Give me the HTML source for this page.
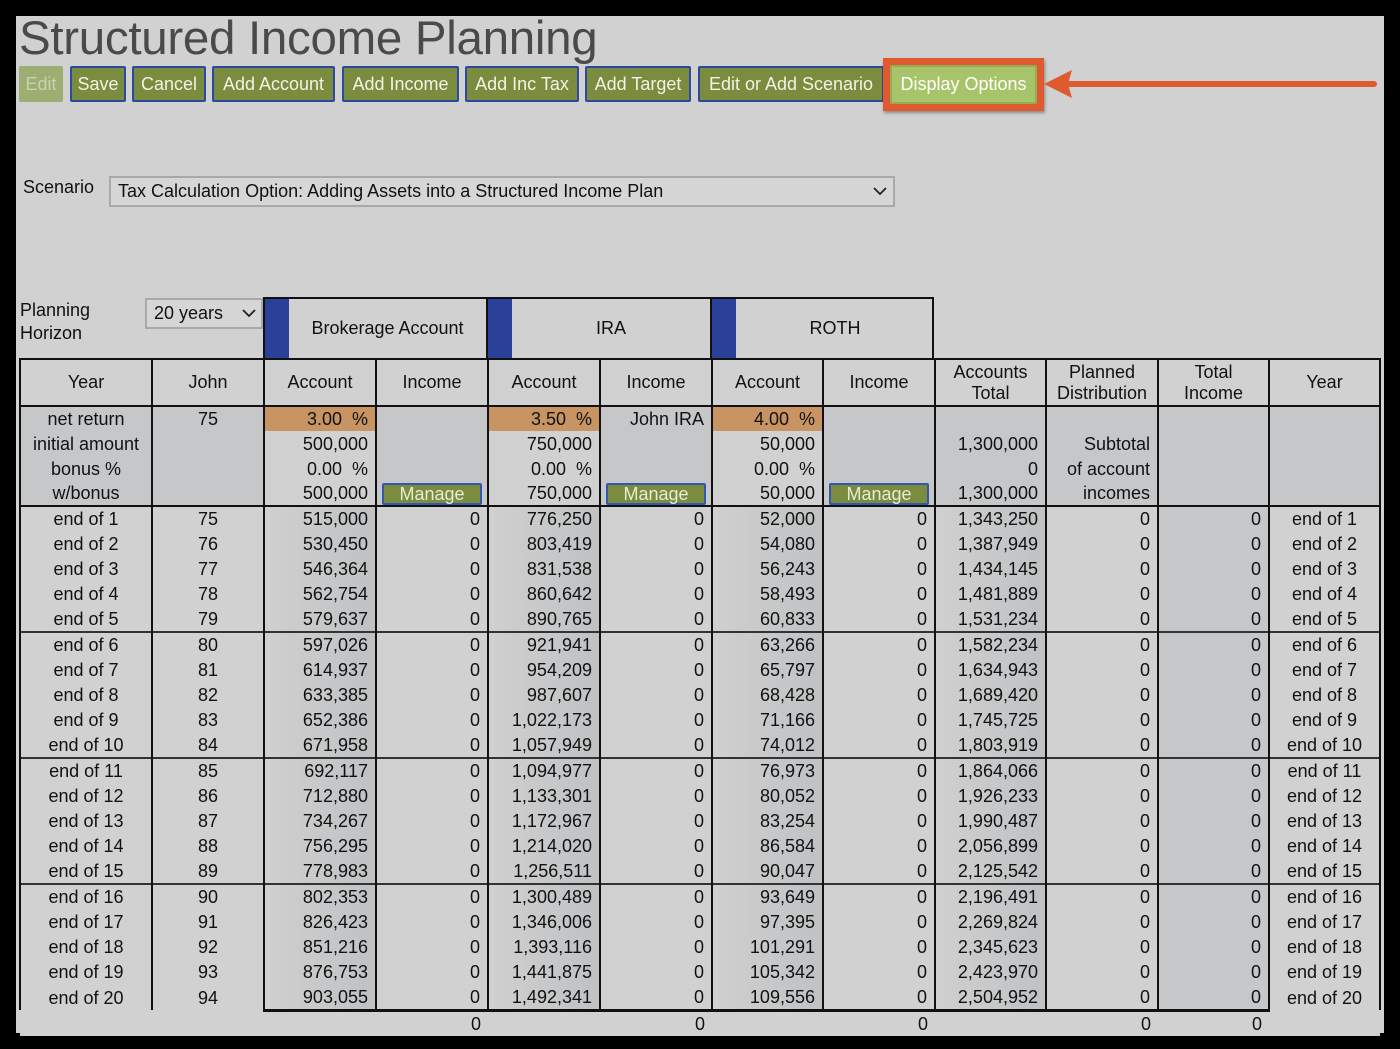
<!DOCTYPE html>
<html><head><meta charset="utf-8"><style>
*{box-sizing:border-box;margin:0;padding:0}
body{width:1400px;height:1049px;background:#000;position:relative;overflow:hidden;font-family:"Liberation Sans",Arial,sans-serif;color:#111}
#pg{position:absolute;left:16px;top:16px;width:1368px;height:1017px;background:#d1d1d1}
.a{position:absolute}
h1{position:absolute;left:3px;top:-5px;font-size:47.5px;font-weight:normal;color:#4a4a4a;letter-spacing:-0.3px}
.btn{position:absolute;top:50px;height:36px;background:#7b8c3e;border:2px solid #2c4ba0;border-radius:2px;color:#f0f3e6;font-size:18px;line-height:32px;text-align:center;white-space:nowrap}
.sel{position:absolute;background:#d6d6d6;border:2px solid #a9a9a9;font-size:18px;padding-left:7px}
table{position:absolute;left:3px;top:342px;border-collapse:collapse;table-layout:fixed;width:1360px}
td{border-left:2px solid #111;border-right:2px solid #111;height:25.2px;font-size:18px;line-height:24px;padding:0 7px;text-align:right;white-space:nowrap;overflow:hidden}
tr.h td{height:47px;border-top:2px solid #111;border-bottom:2px solid #111;text-align:center;line-height:21px;font-size:18px;background:#d1d1d1}
tr.p td{height:25px;background:#c5c7c9}
tr.p td.l{background:#d1d1d1}
tr.p td.o{background:#c99463}
tr.p1 td{border-top:2px solid #111}
td.c{text-align:center}
td.d{background:linear-gradient(to right,#d0d0d0,#bfc1c3)}
td.g{background:#c5c7c9}
tr.s td{border-top:2px solid #333}
tr.p4 td{border-bottom:2px solid #111}
.mg{display:inline-block;width:100px;height:22px;background:#7b8c3e;border:2px solid #3556b0;border-radius:2px;color:#e6ecd6;text-align:center;line-height:19px;font-size:18px;vertical-align:middle}
tr.last td{border-bottom:3px solid #111}
tr.last td.nb{border-bottom:none}
tr.tot td{border:none;background:#d1d1d1;height:24px}
</style></head><body>
<div id="pg">
<h1>Structured Income Planning</h1>
<div class="btn" style="left:3px;width:44px;background:#9cae72;border-color:#9cae72;color:#c9d3b1">Edit</div>
<div class="btn" style="left:54px;width:56px">Save</div>
<div class="btn" style="left:116px;width:74px">Cancel</div>
<div class="btn" style="left:196px;width:123px">Add Account</div>
<div class="btn" style="left:326px;width:117px">Add Income</div>
<div class="btn" style="left:449px;width:114px">Add Inc Tax</div>
<div class="btn" style="left:569px;width:106px">Add Target</div>
<div class="btn" style="left:682px;width:186px">Edit or Add Scenario</div>
<div class="a" style="left:867px;top:42px;width:161px;height:53px;background:#e05a30;box-shadow:1px 2px 3px rgba(0,0,0,.35)"></div>
<div class="btn" style="left:874px;top:49px;width:147px;height:39px;background:#a8c46a;border:2px solid #93ad55;color:#fff;line-height:35px">Display Options</div>
<svg class="a" style="left:1028px;top:52px" width="336" height="34"><path d="M12 16 L330 16" stroke="#e05a30" stroke-width="6" stroke-linecap="round"/><path d="M0 16 L28 2 L24 16 L28 30 Z" fill="#e05a30"/></svg>

<div class="a" style="left:7px;top:161px;font-size:18px">Scenario</div>
<div class="sel" style="left:93px;top:160px;width:786px;height:31px;line-height:27px">Tax Calculation Option: Adding Assets into a Structured Income Plan
<svg class="a" style="right:6px;top:9px" width="14" height="9"><path d="M1 1 L7 7 L13 1" stroke="#222" stroke-width="1.8" fill="none"/></svg></div>

<div class="a" style="left:4px;top:283px;font-size:18px;line-height:23px">Planning<br>Horizon</div>
<div class="sel" style="left:129px;top:282px;width:118px;height:31px;line-height:27px">20 years
<svg class="a" style="right:5px;top:9px" width="14" height="9"><path d="M1 1 L7 7 L13 1" stroke="#222" stroke-width="1.8" fill="none"/></svg></div>

<div class="a" style="left:247px;top:281px;width:671px;height:62px;border:2px solid #111;border-bottom:none;background:#d1d1d1"></div>
<div class="a" style="left:470px;top:281px;width:2px;height:61px;background:#111"></div>
<div class="a" style="left:694px;top:281px;width:2px;height:61px;background:#111"></div>
<div class="a" style="left:249px;top:283px;width:24px;height:60px;background:#2b4199"></div>
<div class="a" style="left:472px;top:283px;width:24px;height:60px;background:#2b4199"></div>
<div class="a" style="left:696px;top:283px;width:24px;height:60px;background:#2b4199"></div>
<div class="a" style="left:273px;top:302px;width:197px;text-align:center;font-size:18px">Brokerage Account</div>
<div class="a" style="left:496px;top:302px;width:198px;text-align:center;font-size:18px">IRA</div>
<div class="a" style="left:720px;top:302px;width:198px;text-align:center;font-size:18px">ROTH</div>

<table>
<colgroup><col style="width:132px"><col style="width:112px"><col style="width:112px"><col style="width:112px"><col style="width:112px"><col style="width:112px"><col style="width:111px"><col style="width:112px"><col style="width:111px"><col style="width:112px"><col style="width:111px"><col style="width:111px"></colgroup>
<tr class="h"><td>Year</td><td>John</td><td>Account</td><td>Income</td><td>Account</td><td>Income</td><td>Account</td><td>Income</td><td>Accounts<br>Total</td><td>Planned<br>Distribution</td><td>Total<br>Income</td><td>Year</td></tr>
<tr class="p p1"><td class="c">net return</td><td class="c">75</td><td class="o">3.00 &nbsp;%</td><td></td><td class="o">3.50 &nbsp;%</td><td>John IRA</td><td class="o">4.00 &nbsp;%</td><td></td><td></td><td></td><td></td><td></td></tr>
<tr class="p"><td class="c">initial amount</td><td></td><td class="l">500,000</td><td></td><td class="l">750,000</td><td></td><td class="l">50,000</td><td></td><td>1,300,000</td><td>Subtotal</td><td></td><td></td></tr>
<tr class="p"><td class="c">bonus %</td><td></td><td class="l">0.00 &nbsp;%</td><td></td><td class="l">0.00 &nbsp;%</td><td></td><td class="l">0.00 &nbsp;%</td><td></td><td>0</td><td>of account</td><td></td><td></td></tr>
<tr class="p p4"><td class="c">w/bonus</td><td></td><td class="l">500,000</td><td class="c" style="padding:0 3px"><span class="mg">Manage</span></td><td class="l">750,000</td><td class="c" style="padding:0 3px"><span class="mg">Manage</span></td><td class="l">50,000</td><td class="c" style="padding:0 3px"><span class="mg">Manage</span></td><td>1,300,000</td><td>incomes</td><td></td><td></td></tr>
<tr><td class="c">end of 1</td><td class="c">75</td><td class="d">515,000</td><td>0</td><td class="d">776,250</td><td>0</td><td class="d">52,000</td><td>0</td><td class="d">1,343,250</td><td>0</td><td class="g">0</td><td class="c">end of 1</td></tr>
<tr><td class="c">end of 2</td><td class="c">76</td><td class="d">530,450</td><td>0</td><td class="d">803,419</td><td>0</td><td class="d">54,080</td><td>0</td><td class="d">1,387,949</td><td>0</td><td class="g">0</td><td class="c">end of 2</td></tr>
<tr><td class="c">end of 3</td><td class="c">77</td><td class="d">546,364</td><td>0</td><td class="d">831,538</td><td>0</td><td class="d">56,243</td><td>0</td><td class="d">1,434,145</td><td>0</td><td class="g">0</td><td class="c">end of 3</td></tr>
<tr><td class="c">end of 4</td><td class="c">78</td><td class="d">562,754</td><td>0</td><td class="d">860,642</td><td>0</td><td class="d">58,493</td><td>0</td><td class="d">1,481,889</td><td>0</td><td class="g">0</td><td class="c">end of 4</td></tr>
<tr><td class="c">end of 5</td><td class="c">79</td><td class="d">579,637</td><td>0</td><td class="d">890,765</td><td>0</td><td class="d">60,833</td><td>0</td><td class="d">1,531,234</td><td>0</td><td class="g">0</td><td class="c">end of 5</td></tr>
<tr class="s"><td class="c">end of 6</td><td class="c">80</td><td class="d">597,026</td><td>0</td><td class="d">921,941</td><td>0</td><td class="d">63,266</td><td>0</td><td class="d">1,582,234</td><td>0</td><td class="g">0</td><td class="c">end of 6</td></tr>
<tr><td class="c">end of 7</td><td class="c">81</td><td class="d">614,937</td><td>0</td><td class="d">954,209</td><td>0</td><td class="d">65,797</td><td>0</td><td class="d">1,634,943</td><td>0</td><td class="g">0</td><td class="c">end of 7</td></tr>
<tr><td class="c">end of 8</td><td class="c">82</td><td class="d">633,385</td><td>0</td><td class="d">987,607</td><td>0</td><td class="d">68,428</td><td>0</td><td class="d">1,689,420</td><td>0</td><td class="g">0</td><td class="c">end of 8</td></tr>
<tr><td class="c">end of 9</td><td class="c">83</td><td class="d">652,386</td><td>0</td><td class="d">1,022,173</td><td>0</td><td class="d">71,166</td><td>0</td><td class="d">1,745,725</td><td>0</td><td class="g">0</td><td class="c">end of 9</td></tr>
<tr><td class="c">end of 10</td><td class="c">84</td><td class="d">671,958</td><td>0</td><td class="d">1,057,949</td><td>0</td><td class="d">74,012</td><td>0</td><td class="d">1,803,919</td><td>0</td><td class="g">0</td><td class="c">end of 10</td></tr>
<tr class="s"><td class="c">end of 11</td><td class="c">85</td><td class="d">692,117</td><td>0</td><td class="d">1,094,977</td><td>0</td><td class="d">76,973</td><td>0</td><td class="d">1,864,066</td><td>0</td><td class="g">0</td><td class="c">end of 11</td></tr>
<tr><td class="c">end of 12</td><td class="c">86</td><td class="d">712,880</td><td>0</td><td class="d">1,133,301</td><td>0</td><td class="d">80,052</td><td>0</td><td class="d">1,926,233</td><td>0</td><td class="g">0</td><td class="c">end of 12</td></tr>
<tr><td class="c">end of 13</td><td class="c">87</td><td class="d">734,267</td><td>0</td><td class="d">1,172,967</td><td>0</td><td class="d">83,254</td><td>0</td><td class="d">1,990,487</td><td>0</td><td class="g">0</td><td class="c">end of 13</td></tr>
<tr><td class="c">end of 14</td><td class="c">88</td><td class="d">756,295</td><td>0</td><td class="d">1,214,020</td><td>0</td><td class="d">86,584</td><td>0</td><td class="d">2,056,899</td><td>0</td><td class="g">0</td><td class="c">end of 14</td></tr>
<tr><td class="c">end of 15</td><td class="c">89</td><td class="d">778,983</td><td>0</td><td class="d">1,256,511</td><td>0</td><td class="d">90,047</td><td>0</td><td class="d">2,125,542</td><td>0</td><td class="g">0</td><td class="c">end of 15</td></tr>
<tr class="s"><td class="c">end of 16</td><td class="c">90</td><td class="d">802,353</td><td>0</td><td class="d">1,300,489</td><td>0</td><td class="d">93,649</td><td>0</td><td class="d">2,196,491</td><td>0</td><td class="g">0</td><td class="c">end of 16</td></tr>
<tr><td class="c">end of 17</td><td class="c">91</td><td class="d">826,423</td><td>0</td><td class="d">1,346,006</td><td>0</td><td class="d">97,395</td><td>0</td><td class="d">2,269,824</td><td>0</td><td class="g">0</td><td class="c">end of 17</td></tr>
<tr><td class="c">end of 18</td><td class="c">92</td><td class="d">851,216</td><td>0</td><td class="d">1,393,116</td><td>0</td><td class="d">101,291</td><td>0</td><td class="d">2,345,623</td><td>0</td><td class="g">0</td><td class="c">end of 18</td></tr>
<tr><td class="c">end of 19</td><td class="c">93</td><td class="d">876,753</td><td>0</td><td class="d">1,441,875</td><td>0</td><td class="d">105,342</td><td>0</td><td class="d">2,423,970</td><td>0</td><td class="g">0</td><td class="c">end of 19</td></tr>
<tr class="last"><td class="c nb">end of 20</td><td class="c nb">94</td><td class="d">903,055</td><td>0</td><td class="d">1,492,341</td><td>0</td><td class="d">109,556</td><td>0</td><td class="d">2,504,952</td><td>0</td><td class="g">0</td><td class="c nb">end of 20</td></tr>
<tr class="tot"><td></td><td></td><td></td><td>0</td><td></td><td>0</td><td></td><td>0</td><td></td><td>0</td><td>0</td><td></td></tr>
</table>
</div>
</body></html>
